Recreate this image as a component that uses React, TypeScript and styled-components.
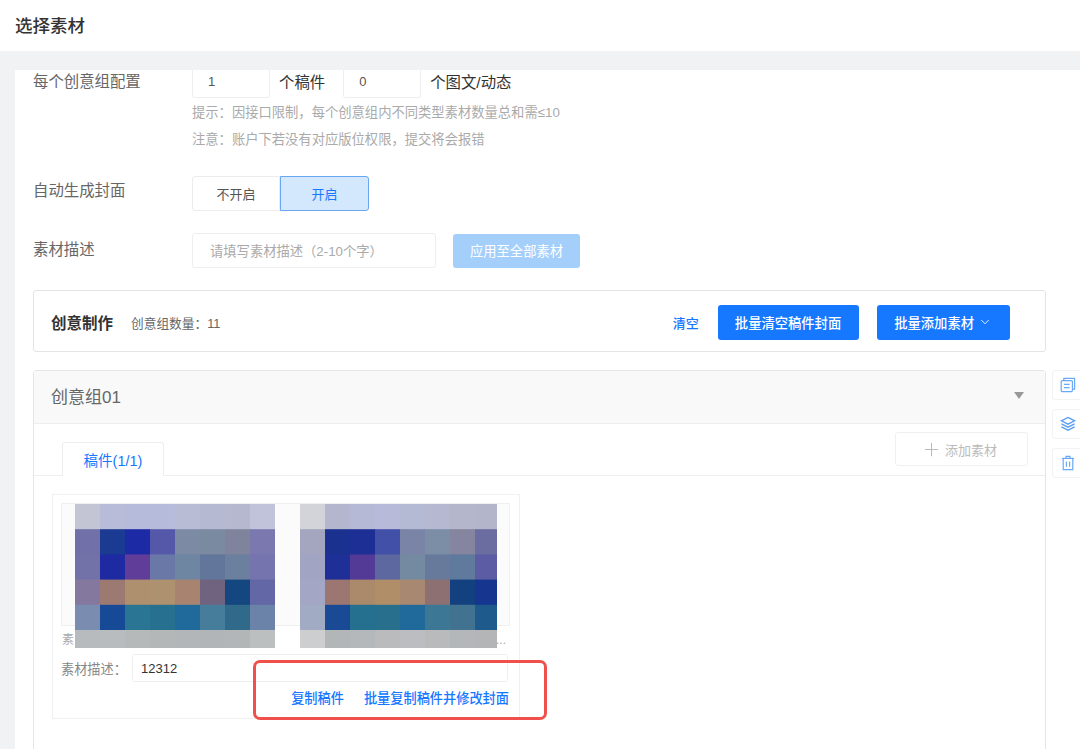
import React from "react";
import styled, { createGlobalStyle } from "styled-components";
import { ChevronDown, Plus } from "lucide-react";

const GlobalStyle = createGlobalStyle`
  html, body {
    margin: 0;
    padding: 0;
    background: #f0f2f3;
    font-family: "Liberation Sans", "Noto Sans CJK SC", sans-serif;
  }
  * { box-sizing: border-box; }
`;

const BLUE = "#1677ff";

const mosaicA = [
  ["#c3c5d4", "#b8bcd8", "#b7bbdb", "#b6badb", "#b9bcd5", "#b6b9d2", "#b5b8cf", "#c0c3d9"],
  ["#7170a8", "#1b3a91", "#1c2aa5", "#5558a8", "#7d8aa3", "#7a8aa0", "#7f849c", "#7a78af"],
  ["#7272a8", "#1d2aa2", "#5f3d98", "#6a78a8", "#6f86a2", "#62759a", "#6b7f9f", "#7674ae"],
  ["#84789f", "#9c7a72", "#ae906f", "#ae916f", "#a88470", "#6f6380", "#14477f", "#6367a6"],
  ["#7a8db0", "#164a96", "#2a7494", "#27708f", "#1f6a9a", "#467d9b", "#2f6a8a", "#6b83a8"],
  ["#b8bbbd", "#b9bcbe", "#b5b9ba", "#b3b7b8", "#b3b6b8", "#b2b5b7", "#b3b6b7", "#bcbfbf"],
];

const mosaicB = [
  ["#d2d4da", "#b3b6cd", "#b6b9d6", "#b7bad8", "#b4b9d4", "#b5b8d0", "#b4b7cc", "#b3b6cb"],
  ["#a4a5bf", "#1a3190", "#1d2f94", "#4350a8", "#7a84a6", "#7c8ea6", "#85859f", "#6b6c9f"],
  ["#a2a4c3", "#1e2f98", "#523a96", "#5d67a0", "#738aa0", "#677a9c", "#5f7a9c", "#5c5ca4"],
  ["#a3a7c5", "#9c7670", "#ab8a6c", "#b08f68", "#a98872", "#8d7071", "#13407f", "#15358f"],
  ["#a1abc3", "#1a4a95", "#26708f", "#286f8d", "#1f6a9b", "#3c7896", "#41728f", "#1e5b8c"],
  ["#ccced0", "#b3b6b7", "#b5b8ba", "#b9bbbd", "#bbbdc0", "#b8babc", "#b4b7b9", "#b3b5b7"],
];

const Mosaic: React.FC<{ cells: string[][]; width: number; className?: string }> = ({
  cells,
  width,
  className,
}) => (
  <svg className={className} width={width} height={144} viewBox={`0 0 ${width} 144`}>
    {cells.map((row, y) =>
      row.map((color, x) => (
        <rect key={`${x}-${y}`} x={x * 25} y={y * 25.2} width={25.5} height={26} fill={color} />
      ))
    )}
  </svg>
);

const CopyIcon = () => (
  <svg width="16" height="16" viewBox="0 0 16 16" fill="none" stroke="#6aa9f5" strokeWidth="1.2">
    <rect x="1.2" y="3.6" width="11.2" height="11" rx="1" />
    <path d="M3.8 3.4V1.4h10.8v10.8h-2" />
    <path d="M4 7.4h5.6M4 10.6h5.6" />
  </svg>
);

const LayersIcon = () => (
  <svg width="16" height="16" viewBox="0 0 16 16" fill="none" stroke="#5a9ff2" strokeWidth="1.3">
    <path d="M8 1.4 14.6 4.8 8 8.2 1.4 4.8Z" />
    <path d="M1.4 7.8 8 11.2 14.6 7.8" />
    <path d="M1.4 10.8 8 14.2 14.6 10.8" />
  </svg>
);

const TrashIcon = () => (
  <svg width="16" height="16" viewBox="0 0 16 16" fill="none" stroke="#6aa9f5" strokeWidth="1.2">
    <path d="M2 3.4h12" />
    <path d="M6 3.2V1.4h4v1.8" />
    <path d="M3.2 3.4v11.2h9.6V3.4" />
    <path d="M6.4 6.4v5.4M9.6 6.4v5.4" />
  </svg>
);

const App: React.FC = () => {
  return (
    <Page>
      <GlobalStyle />
      <Header>选择素材</Header>
      <Panel>
        <FormRow>
          <Label $drop={1}>每个创意组配置</Label>
          <div>
            <CountRow>
              <CountInput>1</CountInput>
              <Unit>个稿件</Unit>
              <CountInput>0</CountInput>
              <Unit>个图文/动态</Unit>
            </CountRow>
            <Hint>提示：因接口限制，每个创意组内不同类型素材数量总和需≤10</Hint>
            <Hint>注意：账户下若没有对应版位权限，提交将会报错</Hint>
          </div>
        </FormRow>

        <ToggleRow>
          <Label $lift={5}>自动生成封面</Label>
          <Toggle>
            <ToggleItem>不开启</ToggleItem>
            <ToggleItem $active>开启</ToggleItem>
          </Toggle>
        </ToggleRow>

        <DescRow>
          <Label $lift={2}>素材描述</Label>
          <DescInput>请填写素材描述（2-10个字）</DescInput>
          <ApplyButton>应用至全部素材</ApplyButton>
        </DescRow>

        <MakeCard>
          <MakeTitle>创意制作</MakeTitle>
          <MakeCount>创意组数量：11</MakeCount>
          <ClearLink>清空</ClearLink>
          <PrimaryButton>批量清空稿件封面</PrimaryButton>
          <PrimaryButton>
            批量添加素材
            <ChevronDown size={14} strokeWidth={1.5} />
          </PrimaryButton>
        </MakeCard>

        <GroupRow>
          <Accordion>
            <AccordionHead>
              创意组01
              <Caret />
            </AccordionHead>
            <TabsRow>
              <Tab>稿件(1/1)</Tab>
              <AddButton>
                <Plus size={21} strokeWidth={1.2} />
                添加素材
              </AddButton>
            </TabsRow>
            <ItemCard>
              <Frame />
              <Captions>
                <span>素</span>
                <span>...</span>
              </Captions>
              <ItemDesc>
                <ItemLabel>素材描述：</ItemLabel>
                <ItemInput>12312</ItemInput>
              </ItemDesc>
              <Links>
                <span>复制稿件</span>
                <span>批量复制稿件并修改封面</span>
              </Links>
              <PictureA cells={mosaicA} width={200} />
              <PictureB cells={mosaicB} width={197} />
              <RedMark />
            </ItemCard>
          </Accordion>
          <SideTools>
            <SideButton>
              <CopyIcon />
            </SideButton>
            <SideButton>
              <LayersIcon />
            </SideButton>
            <SideButton>
              <TrashIcon />
            </SideButton>
          </SideTools>
        </GroupRow>
      </Panel>
    </Page>
  );
};

export default App;

const Page = styled.div`
  width: 1080px;
  height: 749px;
  overflow: hidden;
  background: #f0f2f3;
`;

const Header = styled.div`
  height: 51px;
  padding: 0 0 2px 15px;
  display: flex;
  align-items: center;
  background: #fff;
  color: #333;
  font-size: 17.5px;
  font-weight: 500;
`;

const Panel = styled.div`
  height: 679px;
  margin: 19px 0 0 15px;
  padding-left: 18px;
  overflow: hidden;
  background: #fff;
`;

const FormRow = styled.div`
  display: flex;
  align-items: flex-start;
`;

const Label = styled.div<{ $lift?: number; $drop?: number }>`
  width: 159px;
  flex: none;
  padding-top: ${({ $drop }) => $drop ?? 0}px;
  padding-bottom: ${({ $lift }) => $lift ?? 0}px;
  color: #666;
  font-size: 15.4px;
  line-height: 22px;
`;

const CountRow = styled.div`
  display: flex;
  align-items: center;
  height: 29px;
`;

const CountInput = styled.div`
  width: 78px;
  height: 28px;
  margin-bottom: 1px;
  padding: 0 0 5px 15px;
  display: flex;
  align-items: center;
  border: 1px solid #eeeeee;
  border-top: none;
  border-radius: 0 0 3px 3px;
  color: #555;
  font-size: 13px;
`;

const Unit = styled.div`
  margin: 0 18px 7px 9px;
  min-width: 46px;
  color: #333;
  font-size: 15.4px;
  white-space: nowrap;
`;

const Hint = styled.div`
  height: 27px;
  line-height: 27px;
  color: #aaa;
  font-size: 13.3px;
`;

const ToggleRow = styled.div`
  display: flex;
  align-items: center;
  margin-top: 23px;
`;

const Toggle = styled.div`
  display: flex;
  height: 35px;
`;

const ToggleItem = styled.div<{ $active?: boolean }>`
  width: ${({ $active }) => ($active ? 89 : 88)}px;
  display: flex;
  align-items: center;
  justify-content: center;
  font-size: 13px;
  color: ${({ $active }) => ($active ? BLUE : "#555")};
  background: ${({ $active }) => ($active ? "#d3e7fd" : "#fff")};
  border: 1px solid ${({ $active }) => ($active ? "#69a7f0" : "#ececec")};
  border-radius: ${({ $active }) => ($active ? "0 3px 3px 0" : "3px 0 0 3px")};
`;

const DescRow = styled.div`
  display: flex;
  align-items: center;
  margin-top: 22px;
`;

const DescInput = styled.div`
  width: 244px;
  height: 35px;
  padding-left: 17px;
  display: flex;
  align-items: center;
  border: 1px solid #eeeeee;
  border-radius: 3px;
  color: #aaa;
  font-size: 13.3px;
`;

const ApplyButton = styled.div`
  width: 127px;
  height: 34px;
  margin-left: 17px;
  display: flex;
  align-items: center;
  justify-content: center;
  background: #a4cffb;
  border-radius: 3px;
  color: #fff;
  font-size: 13.3px;
`;

const MakeCard = styled.div`
  width: 1013px;
  height: 62px;
  margin-top: 22px;
  padding: 2px 35px 0 17px;
  display: flex;
  align-items: center;
  border: 1px solid #e4e4e4;
  border-radius: 3px;
`;

const MakeTitle = styled.div`
  color: #333;
  font-size: 15.5px;
  font-weight: 700;
`;

const MakeCount = styled.div`
  margin-left: 18px;
  color: #666;
  font-size: 12.7px;
`;

const ClearLink = styled.div`
  margin-left: auto;
  margin-right: 19px;
  color: ${BLUE};
  font-size: 13px;
  font-weight: 500;
`;

const PrimaryButton = styled.div`
  height: 35px;
  padding: 0 18px 0 17px;
  display: flex;
  align-items: center;
  gap: 4px;
  background: ${BLUE};
  border-radius: 3px;
  color: #fff;
  font-size: 13.3px;
  font-weight: 500;
  & + & {
    margin-left: 18px;
  }
`;

const GroupRow = styled.div`
  display: flex;
  align-items: flex-start;
  gap: 6px;
  margin-top: 18px;
`;

const Accordion = styled.div`
  width: 1013px;
  height: 400px;
  flex: none;
  border: 1px solid #e6e6e6;
  border-radius: 3px 3px 0 0;
`;

const AccordionHead = styled.div`
  height: 53px;
  padding: 0 21px 3px 17px;
  display: flex;
  align-items: center;
  justify-content: space-between;
  background: #f9f9f9;
  border-bottom: 1px solid #eeeeee;
  color: #666;
  font-size: 17px;
`;

const Caret = styled.span`
  width: 0;
  height: 0;
  border-left: 5.5px solid transparent;
  border-right: 5.5px solid transparent;
  border-top: 7px solid #999;
`;

const TabsRow = styled.div`
  height: 52px;
  padding: 0 17px 0 28px;
  position: relative;
  display: flex;
  align-items: flex-end;
  justify-content: space-between;
  border-bottom: 1px solid #eeeeee;
`;

const Tab = styled.div`
  width: 102px;
  height: 34px;
  margin-bottom: -1px;
  display: flex;
  align-items: center;
  justify-content: center;
  background: #fff;
  border: 1px solid #eeeeee;
  border-bottom: none;
  border-radius: 3px 3px 0 0;
  color: ${BLUE};
  font-size: 14.5px;
`;

const AddButton = styled.div`
  width: 133px;
  height: 34px;
  margin-bottom: 9px;
  padding-left: 25px;
  display: flex;
  align-items: center;
  gap: 3px;
  border: 1px solid #f0f0f0;
  border-radius: 3px;
  color: #bbb;
  font-size: 13px;
`;

const ItemCard = styled.div`
  position: relative;
  width: 468px;
  height: 225px;
  margin: 18px 0 0 18px;
  padding: 8px 9px 0 8px;
  border: 1px solid #f0f0f0;
`;

const Frame = styled.div`
  height: 123px;
  background: #fbfbfb;
  border: 1px solid #f0f0f0;
`;

const Captions = styled.div`
  height: 16px;
  margin-top: 6px;
  padding: 0 4px 0 1px;
  display: flex;
  justify-content: space-between;
  color: #aaa;
  font-size: 12px;
  line-height: 16px;
`;

const ItemDesc = styled.div`
  display: flex;
  align-items: center;
  margin-top: 6px;
`;

const ItemLabel = styled.div`
  width: 71px;
  color: #888;
  font-size: 13.2px;
  white-space: nowrap;
`;

const ItemInput = styled.div`
  width: 376px;
  height: 28px;
  padding-left: 8px;
  display: flex;
  align-items: center;
  border: 1px solid #eeeeee;
  border-radius: 3px;
  color: #333;
  font-size: 13px;
`;

const Links = styled.div`
  margin-top: 6px;
  padding-right: 1px;
  display: flex;
  justify-content: flex-end;
  gap: 20px;
  color: ${BLUE};
  font-size: 13.2px;
  font-weight: 500;
`;

const PictureA = styled(Mosaic)`
  position: absolute;
  left: 22px;
  top: 9px;
  filter: blur(0.4px);
`;

const PictureB = styled(Mosaic)`
  position: absolute;
  left: 247px;
  top: 9px;
  filter: blur(0.4px);
`;

const RedMark = styled.div`
  position: absolute;
  left: 200px;
  top: 165px;
  width: 294px;
  height: 60px;
  border: 3px solid #f0504b;
  border-radius: 7px;
`;

const SideTools = styled.div`
  display: flex;
  flex-direction: column;
  gap: 9px;
`;

const SideButton = styled.div`
  width: 34px;
  height: 30px;
  padding-left: 7px;
  display: flex;
  align-items: center;
  border: 1px solid #f3f3f3;
  border-radius: 3px;
`;
